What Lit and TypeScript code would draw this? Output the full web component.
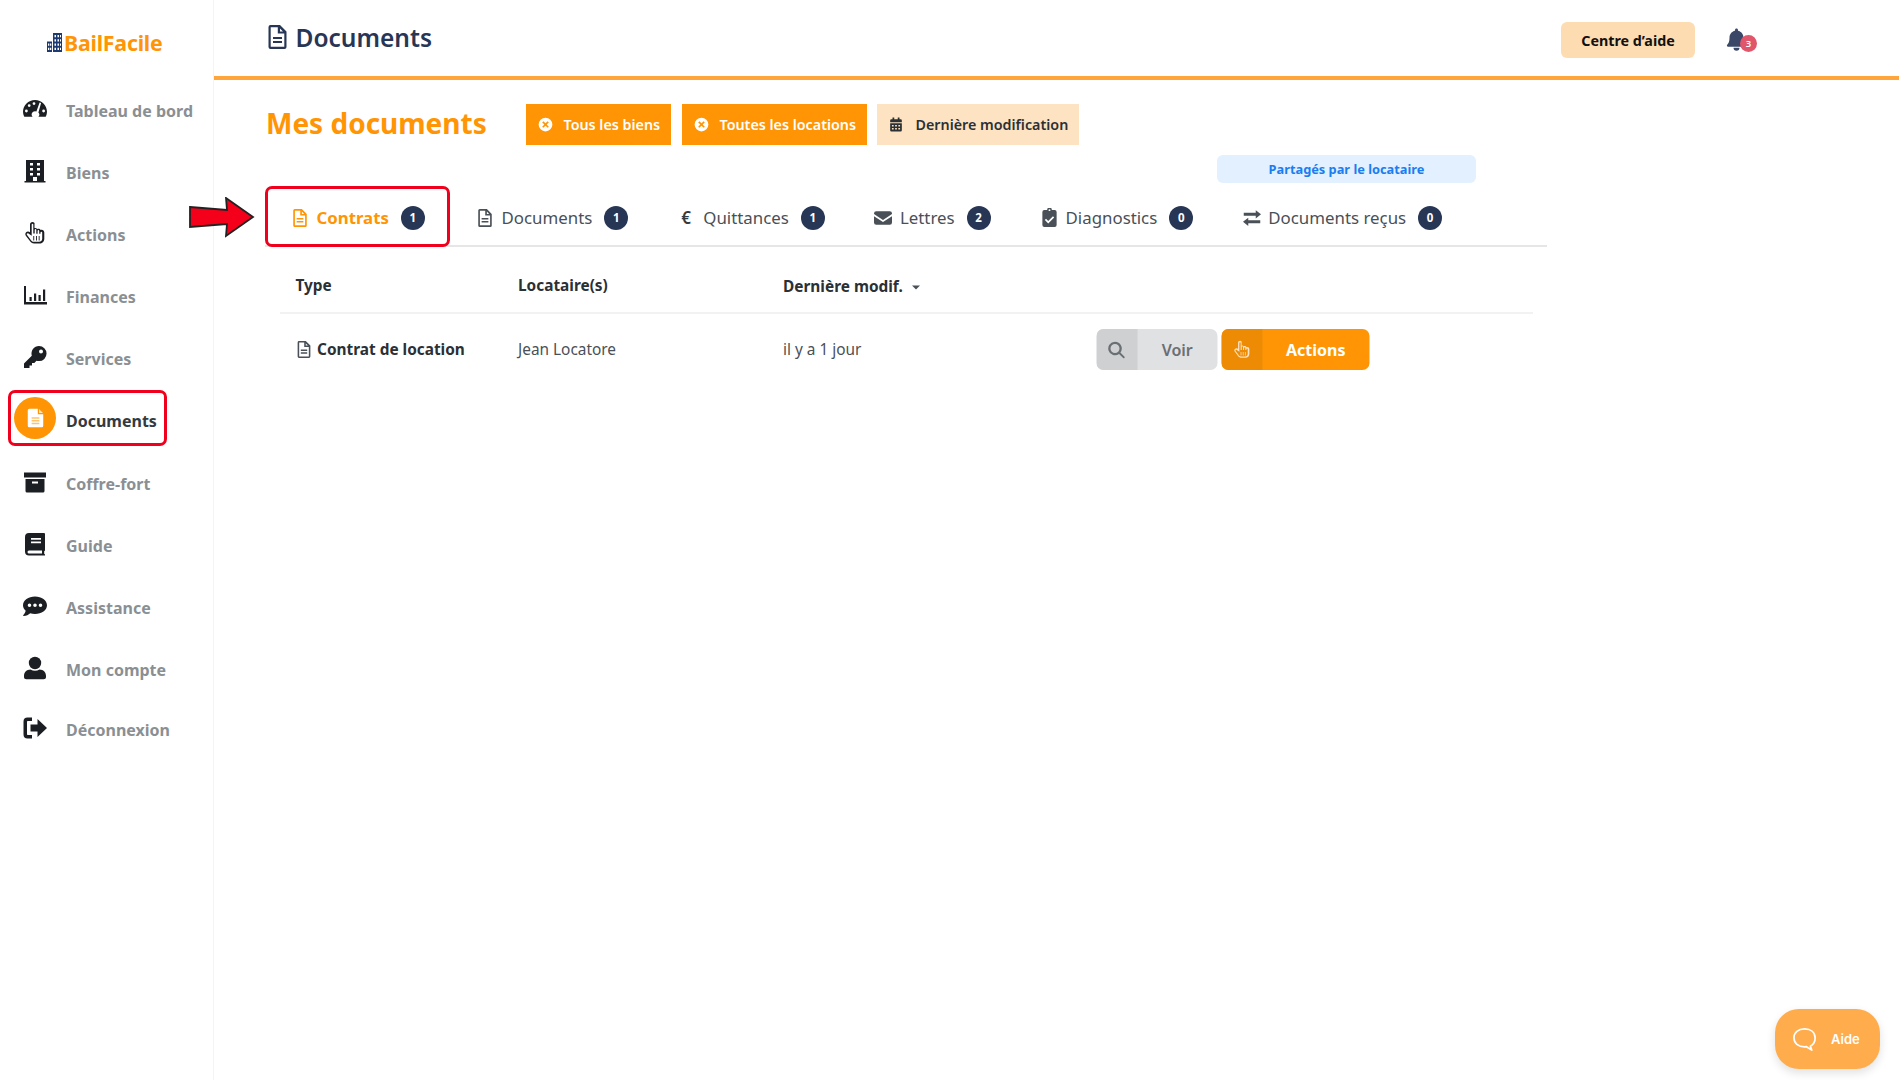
import { LitElement, html, css, svg } from "lit";
import { customElement } from "lit/decorators.js";

const ico = (vb: string, body: unknown, cls = "") =>
  html`<svg class=${cls} viewBox=${vb} fill="currentColor" aria-hidden="true">${body}</svg>`;

const I: Record<string, unknown> = {
  gauge: svg`<path fill-rule="evenodd" d="M12 3C5.400 3 0 8.300 0 14.800c0 1.600.4 3 1 4.400.2.4.6.6 1 .6h20c.4 0 .8-.2 1-.6.6-1.400 1-2.800 1-4.400C24 8.300 18.600 3 12 3zM11 5.200a1.400 1.400 0 1 1 0 2.800 1.400 1.400 0 0 1 0-2.800zM6.200 7.200a1.400 1.400 0 1 1 0 2.800 1.400 1.400 0 0 1 0-2.800zM3.400 12.600a1.400 1.400 0 1 1 0 2.800 1.400 1.400 0 0 1 0-2.800zM20.600 12.600a1.400 1.400 0 1 1 0 2.800 1.400 1.400 0 0 1 0-2.800zM16.600 5.500l1.500.5-2.700 9.400c.6.600 1 1.300 1 2.100 0 .9-.4 1.700-1 2.300H9.600c-.6-.6-1-1.400-1-2.300 0-1.900 1.500-3.200 3.500-3.200l1.300.1z"/>`,
  building: svg`<path fill-rule="evenodd" d="M3 1h18v21h1.500v1.500h-21V22H3zM7 4v2.500h3V4zm7 0v2.500h3V4zM7 9v2.500h3V9zm7 0v2.500h3V9zM7 14v2.500h3V14zm7 0v2.500h3V14zm-4 4v4h4v-4z"/>`,
  hand: svg`<path fill-rule="evenodd" d="M9.500 1C8 1 7 2.100 7 3.500v7.700c-.6-.5-1.300-.8-2-.8-1.500 0-2.700 1.300-2.700 2.700 0 .7.200 1.300.7 1.800l4.300 5.700c.9 1.200 2.300 1.900 3.800 1.900h5.400c2.700 0 4.800-2.100 4.800-4.800V11.500c0-1.500-1.200-2.700-2.600-2.700-.4 0-.7.100-1 .2-.5-.8-1.300-1.300-2.200-1.300-.5 0-.9.100-1.300.3-.5-.6-1.200-1-2-1-.3 0-.5 0-.7.100V3.500C12 2.100 11 1 9.500 1zm0 1.700c.4 0 .8.300.8.800v9h1.400V8.700c0-.5.400-.8.800-.8s.8.300.8.800v4h1.300V9.900c0-.5.400-.8.800-.8s.8.300.8.800v2.800h1.300v-1.200c0-.4.400-.8.900-.8.400 0 .8.400.8.800v6.200c0 1.700-1.400 3.100-3.100 3.100h-5.400c-1 0-1.900-.5-2.500-1.300l-4.300-5.700c-.5-.8.100-1.600.800-1.600.3 0 .5.100.7.300L8.700 14.800V3.500c0-.5.400-.8.800-.8zM11.200 15h-.9v4.500h.9zm2.700 0H13v4.500h.9zm2.700 0h-.9v4.500h.9z"/>`,
  chart: svg`<path d="M1 3h2v16h21v2.500H1zM6.500 14h2.200v4H6.500zM11 10.500h2.200v7.500H11zM15.500 12h2.200v6h-2.200zM20 6.500h2.200V18H20z"/>`,
  key: svg`<path fill-rule="evenodd" d="M16 1a7.500 7.500 0 0 0-7.200 9.700L1 18.500V23h5.500v-2.500H9V18h2.300l2.200-2.300c.8.300 1.600.4 2.500.4A7.500 7.500 0 0 0 16 1zm2 3.500a2 2 0 1 1 0 4 2 2 0 0 1 0-4z"/>`,
  archive: svg`<path d="M1 2.500h22v5H1zM2.500 9h19v12a1.500 1.500 0 0 1-1.500 1.500H4A1.500 1.500 0 0 1 2.500 21zm6.500 2.500v2h6v-2z" fill-rule="evenodd"/>`,
  book: svg`<path fill-rule="evenodd" d="M6 1h15a1 1 0 0 1 1 1v16.500l-.8.700v2.600l.8.700V23.500H6a4 4 0 0 1-4-4V5a4 4 0 0 1 4-4zm2 5v1.700h10V6zm0 3.500v1.700h10V9.500zM6 18.500a1.500 1.500 0 0 0 0 3h13v-3z"/>`,
  comment: svg`<path fill-rule="evenodd" d="M12 2.500c6.600 0 12 3.900 12 8.800s-5.400 8.800-12 8.800c-1.700 0-3.400-.3-4.800-.8C5.500 20.700 3.400 22 .6 22c-.5 0-.7-.5-.4-.8 1-1.100 2.100-2.700 2.500-4.400C1 15.300 0 13.400 0 11.300 0 6.400 5.400 2.500 12 2.500zM6.500 9.500a1.800 1.800 0 1 0 0 3.600 1.800 1.800 0 0 0 0-3.600zm5.500 0a1.800 1.800 0 1 0 0 3.600 1.800 1.800 0 0 0 0-3.600zm5.500 0a1.800 1.800 0 1 0 0 3.600 1.800 1.800 0 0 0 0-3.600z"/>`,
  user: svg`<circle cx="12" cy="7" r="6.200"/><path d="M7.500 13.500c1.300.8 2.900 1.200 4.500 1.200s3.200-.4 4.500-1.200c3.800 0 6.500 2.800 6.500 6.300v1.200c0 1.300-1 2.300-2.300 2.300H3.300C2 23.300 1 22.300 1 21v-1.200c0-3.500 2.700-6.300 6.500-6.300z"/>`,
  logout: svg`<path d="M9 5H5C4.400 5 4 5.400 4 6v12c0 .6.400 1 1 1h4v3.500H4.500A4 4 0 0 1 .5 18.500v-13a4 4 0 0 1 4-4H9z"/><path d="M14.500 3 24 12l-9.500 9v-5.500H7.500v-7h7z"/>`,
  fileo: svg`<path fill-rule="evenodd" d="M5 0h9.500L21 6.500V22a2 2 0 0 1-2 2H5a2 2 0 0 1-2-2V2a2 2 0 0 1 2-2zm.2 2.200V21.800h13.600V8.500h-6.500V2.200zm9.300 1.200V6.500h3zM7.500 12h9v2h-9zm0 4h9v2h-9z"/>`,
  xc: svg`<path fill-rule="evenodd" d="M12 1a11 11 0 1 1 0 22 11 11 0 0 1 0-22zM8.600 6.700 6.700 8.600 10.100 12l-3.400 3.400 1.900 1.900 3.400-3.400 3.400 3.400 1.900-1.900-3.400-3.400 3.400-3.400-1.900-1.900L12 10.100z"/>`,
  cal: svg`<path fill-rule="evenodd" d="M6 0h3v3h6V0h3v3h2a2 2 0 0 1 2 2v3H2V5a2 2 0 0 1 2-2h2zM2 10h20v12a2 2 0 0 1-2 2H4a2 2 0 0 1-2-2zm3 3v2.500h3V13zm5.500 0v2.500h3V13zm5.500 0v2.500h3V13zM5 18v2.500h3V18zm5.500 0v2.500h3V18zm5.500 0v2.500h3V18z"/>`,
  mail: svg`<path d="M3 3h18a3 3 0 0 1 3 3v.8L12 14.500 0 6.800V6a3 3 0 0 1 3-3zM0 9.500l12 7.700 12-7.700V18a3 3 0 0 1-3 3H3a3 3 0 0 1-3-3z"/>`,
  clip: svg`<path fill-rule="evenodd" d="M9 2.500a3 3 0 0 1 6 0h3.500A2.500 2.500 0 0 1 21 5v16.500a2.500 2.500 0 0 1-2.500 2.500h-13A2.500 2.500 0 0 1 3 21.500V5a2.500 2.500 0 0 1 2.500-2.500zM12 1.500a1.200 1.200 0 1 0 0 2.400 1.200 1.200 0 0 0 0-2.400zM16.400 10.500l-6 6-2.800-2.800-1.500 1.500 4.300 4.400 7.500-7.600z"/>`,
  swap: svg`<path d="M17 1.500 24 7l-7 5.500V9H1V5h16zM7 11.500V15h16v4H7v3.500L0 17z"/>`,
  search: svg`<path fill-rule="evenodd" d="M10 1a9 9 0 0 1 7.200 14.400l5.500 5.500a1.300 1.300 0 0 1-1.800 1.800l-5.500-5.500A9 9 0 1 1 10 1zm0 3a6 6 0 1 0 0 12 6 6 0 0 0 0-12z"/>`,
  bell: svg`<path d="M12 0c1 0 1.700.7 1.700 1.700v.9C17.500 3.400 20 6.700 20 10.500c0 4.500 1 6.300 2.600 8 .4.400.5 1 .3 1.400-.2.600-.7.900-1.300.9H2.400c-.6 0-1.100-.3-1.300-.9-.2-.5-.1-1 .3-1.400 1.600-1.700 2.600-3.500 2.600-8 0-3.800 2.500-7.100 6.300-7.900v-.9C10.300.7 11 0 12 0zM8.600 22h6.800a3.400 3.400 0 0 1-6.800 0z"/>`,
};

const NAV: [string, string][] = [
  ["gauge", "Tableau de bord"], ["building", "Biens"], ["hand", "Actions"], ["chart", "Finances"],
  ["key", "Services"], ["file", "Documents"], ["archive", "Coffre-fort"], ["book", "Guide"],
  ["comment", "Assistance"], ["user", "Mon compte"], ["logout", "Déconnexion"],
];

const TABS: [string, string, number][] = [
  ["fileo", "Contrats", 1], ["fileo", "Documents", 1], ["euro", "Quittances", 1],
  ["mail", "Lettres", 2], ["clip", "Diagnostics", 0], ["swap", "Documents reçus", 0],
];

const FILE_VB = "3 0 18 24";

@customElement("app-root")
export class AppRoot extends LitElement {
  static styles = css`
    :host { display: block; width: 1899px; height: 1080px; overflow: hidden; background: #fff; color: #212529;
      font-family: "Noto Sans", "Open Sans", sans-serif; position: relative; }
    * { box-sizing: border-box; }
    svg { display: block; flex: none; }
    .app { display: flex; height: 1080px; }
    .side { width: 214px; flex: none; border-right: 1px solid #f4f4f5; padding-top: 28px; display: flex; flex-direction: column; }
    .logo { display: flex; align-items: center; gap: 2px; height: 28px; margin: 0 0 24px 47px; color: #ff9505; font-weight: 700; font-size: 21.300px; letter-spacing: -.2px; }
    .logo svg { width: 15px; height: 19px; }
    .nav { display: flex; flex-direction: column; padding-left: 8px; }
    .item { height: 62.100px; display: flex; align-items: center; color: #8a8f93; font-weight: 700; font-size: 16px; padding-left: 15px; white-space: nowrap; }
    .item:last-child { margin-top: -1.500px; }
    .item svg { width: 24px; height: 24px; color: #1b1e22; margin-right: 19px; transform: translateY(-2px); }
    .item.on { color: #343a40; width: 159px; height: 56px; margin: 0 0 6.100px; border: 3px solid #f0001c; border-radius: 7px; padding-left: 3px; }
    .item.on span { transform: translateY(2.500px); }
    .disc { width: 42px; height: 42px; border-radius: 50%; background: #ff9505; display: flex; align-items: center; justify-content: center; margin-right: 10px; flex: none; }
    .item .disc svg { width: 17px; height: 22px; margin: 0; color: #fff; transform: none; }
    .main { flex: 1; min-width: 0; display: flex; flex-direction: column; }
    .top { height: 80px; flex: none; border-bottom: 4px solid #ffa53c; display: flex; align-items: center; padding: 4px 142px 0 54px; }
    .ttl { display: flex; align-items: center; gap: 8.500px; font-size: 24.500px; font-weight: 600; color: #283655; flex: 1; transform: translateY(-3px); }
    .ttl svg { width: 19px; height: 24px; }
    .help { background: #fddcb2; border-radius: 6px; width: 134px; height: 36px; display: flex; align-items: center; justify-content: center; font-size: 14.300px; font-weight: 700; color: #111; margin-right: 31px; }
    .bell { position: relative; width: 31px; height: 30px; }
    .bell svg { width: 21px; height: 28px; color: #3a4766; }
    .bell b { position: absolute; left: 14px; top: 10px; width: 17px; height: 17px; border-radius: 50%; background: #e0566b; color: #fff; font-size: 9.500px; font-weight: 600; display: flex; align-items: center; justify-content: center; }
    .content { padding: 0 0 0 52px; }
    .head { display: flex; align-items: center; height: 41px; margin-top: 24px; }
    h1 { margin: 0 39.500px 0 0; color: #ff9505; font-size: 28px; font-weight: 700; line-height: 41px; width: 220px; white-space: nowrap; transform: translateY(-1px); }
    .fil { height: 41px; display: flex; align-items: center; background: #ff9505; color: #fff; font-size: 14.300px; font-weight: 600; padding: 0 11px 0 12px; margin-right: 10.500px; white-space: nowrap; }
    .fil svg { width: 15px; height: 15px; margin-right: 11px; color: #fff; }
    .fil.alt { background: #fde3c2; color: #2b3035; }
    .fil.alt svg { color: #2b3035; margin-right: 12px; width: 14px; }
    .shared { width: 259px; height: 28px; margin: 10px 0 0 951px; border-radius: 6px; background: #e2f0ff; color: #1a7df0; font-size: 12.800px; font-weight: 700; display: flex; align-items: center; justify-content: center; }
    .tabs { display: flex; align-items: flex-start; width: 1282px; height: 61px; margin: 3px 0 0 -1px; border-bottom: 2px solid #e6e6e6; }
    .tab { height: 61px; flex: none; display: flex; align-items: center; font-size: 16.850px; color: #495057; white-space: nowrap; padding: 2px 25px 0 26px; }
    .tab svg { height: 18px; width: 14px; margin-right: 9.500px; color: #495057; }
    .tab svg.fileo { margin-left: 2px; }
    .tab svg.mail { width: 18px; margin-left: -2px; margin-right: 8px; }
    .tab svg.clip { width: 15px; height: 19px; margin-right: 9px; }
    .tab svg.swap { width: 18px; height: 18px; margin-left: -1px; margin-right: 7px; }
    .tab .eu { width: 12px; margin: 0 10px 0 2px; font-size: 17px; font-weight: 600; color: #343a40; line-height: 1; }
    .tab.on { color: #ff9505; font-weight: 700; border: 3px solid #f0001c; border-radius: 7px; padding: 2px 22px 0 23px; width: 185px; font-size: 16.800px; }
    .tab.on svg { color: #ff9505; margin-left: 2px; }
    .badge { width: 24px; height: 24px; border-radius: 50%; background: #283655; color: #fff; font-size: 11.500px; font-weight: 700; margin-left: 12px; display: flex; align-items: center; justify-content: center; flex: none; }
    .tbl { width: 1253px; margin-left: 14px; }
    .tr { display: grid; grid-template-columns: 238px 265px 312.700px 1fr; align-items: center; }
    .th { height: 66.500px; border-bottom: 2px solid #f2f2f2; font-size: 15.400px; font-weight: 700; color: #2b3035; padding-top: 13px; }
    .th > div:first-child, .td > div:first-child { padding-left: 15.500px; }
    .sort { display: flex; align-items: center; gap: 9px; transform: translateY(.5px); }
    .sort i { width: 0; height: 0; border: 4px solid transparent; border-top: 4.500px solid #495057; border-bottom: 0; margin-top: 2px; }
    .td { height: 72.500px; font-size: 15.400px; color: #495057; }
    .td > div:first-child.doc { display: flex; align-items: center; gap: 6px; font-weight: 700; color: #2b3035; padding-left: 17px; }
    .doc svg { width: 14px; height: 17px; color: #495057; }
    .acts { display: flex; gap: 4px; transform: translateX(.5px); }
    .btn { height: 41px; border-radius: 7px; display: flex; overflow: hidden; font-size: 16px; font-weight: 700; align-items: center; }
    .btn span { width: 41px; height: 100%; display: flex; align-items: center; justify-content: center; flex: none; }
    .btn em { flex: 1; text-align: center; font-style: normal; }
    .voir { width: 121px; background: #e0e1e3; color: #6a6f74; font-weight: 600; }
    .voir span { background: #cfd0d2; }
    .voir svg { width: 18px; height: 18px; color: #6a6f74; }
    .act { width: 148px; background: #ff9505; color: #fff; }
    .act span { background: #ee8b05; }
    .act svg { width: 19px; height: 19px; color: #fde3c2; }
    .arrow { position: absolute; left: 189px; top: 197px; width: 67px; height: 41px; }
    .aide { position: absolute; left: 1775px; top: 1009px; width: 105px; height: 60px; border-radius: 24px; background: #ffac4d; color: #fff; box-shadow: 0 4px 10px rgba(0,0,0,.12); display: flex; align-items: center; padding-left: 17px; gap: 12px; font-family: Inter, sans-serif; font-size: 13px; font-weight: 600; }
    .aide svg { width: 27px; height: 27px; }
  `;

  render() {
    return html`<div class="app">
      <aside class="side">
        <div class="logo">
          <svg viewBox="0 0 15 18" preserveAspectRatio="none"><path fill="#1d3a73" d="M0 8h5v10H0zM6 0h9v18H6z"/><path fill="#fff" d="M7.500 2h1.500v2H7.500zm3 0H12v2h-1.500zm2.500 0h1v2h-1zM7.500 6h1.500v2H7.500zm3 0H12v2h-1.500zm2.500 0h1v2h-1zM7.500 10h1.500v2H7.500zm3 0H12v2h-1.500zm2.500 0h1v2h-1zM1 10h1.300v2H1zm2 0h1.300v2H3zM1 14h1.300v2H1zm2 0h1.300v2H3zM7.500 14h1.500v2H7.500zm3 0H12v2h-1.500zm2.500 0h1v2h-1z"/></svg>
          <span>BailFacile</span>
        </div>
        <nav class="nav">
          ${NAV.map(([i, t]) => t === "Documents"
            ? html`<div class="item on"><div class="disc">${ico("0 0 22 24", svg`<path fill="#fff" d="M3 0h11v7h7v15a2 2 0 0 1-2 2H3a2 2 0 0 1-2-2V2a2 2 0 0 1 2-2z"/><path fill="#ffe6c4" d="M15.500.4 20.600 5.500h-5.100z"/><path fill="#ffc36e" d="M6 11h10v2H6zm0 3.500h10v2H6zM6 18h10v2H6z"/>`)}</div><span>${t}</span></div>`
            : html`<div class="item">${ico("0 0 24 24", I[i])}${t}</div>`)}
        </nav>
      </aside>
      <main class="main">
        <header class="top">
          <div class="ttl">${ico(FILE_VB, I.fileo)}Documents</div>
          <div class="help">Centre d’aide</div>
          <div class="bell">${ico("0 0 24 24", I.bell)}<b>3</b></div>
        </header>
        <section class="content">
          <div class="head">
            <h1>Mes documents</h1>
            <div class="fil">${ico("0 0 24 24", I.xc)}Tous les biens</div>
            <div class="fil">${ico("0 0 24 24", I.xc)}Toutes les locations</div>
            <div class="fil alt">${ico("0 0 24 24", I.cal)}Dernière modification</div>
          </div>
          <div class="shared">Partagés par le locataire</div>
          <div class="tabs">
            ${TABS.map(([i, t, n], k) => html`<div class="tab ${k === 0 ? "on" : ""}">
              ${i === "euro" ? html`<span class="eu">€</span>` : ico(i === "fileo" || i === "clip" ? FILE_VB : "0 0 24 24", I[i], i)}${t}<span class="badge">${n}</span></div>`)}
          </div>
          <div class="tbl">
            <div class="tr th"><div>Type</div><div>Locataire(s)</div><div class="sort">Dernière modif.<i></i></div><div></div></div>
            <div class="tr td">
              <div class="doc">${ico(FILE_VB, I.fileo)}Contrat de location</div>
              <div>Jean Locatore</div>
              <div>il y a 1 jour</div>
              <div class="acts">
                <div class="btn voir"><span>${ico("0 0 24 24", I.search)}</span><em>Voir</em></div>
                <div class="btn act"><span>${ico("0 0 24 24", I.hand)}</span><em>Actions</em></div>
              </div>
            </div>
          </div>
        </section>
      </main>
    </div>
    <svg class="arrow" viewBox="0 0 67 41"><path d="M1 10 38 13 37 1 64 20 37 39 38 27 1 30z" fill="#f5001a" stroke="#222" stroke-width="1.800" stroke-linejoin="miter"/></svg>
    <div class="aide">
      <svg viewBox="0 0 28 28" fill="none" stroke="#fff" stroke-width="1.800"><path d="M13 3c6.500 0 11 3.500 11 9.500 0 4-2 7-5 8.500l1.500 4-5.500-3.500c-.7.100-1.300.100-2 .1C6.500 21.600 2 17.800 2 12.300 2 6.700 6.500 3 13 3z" stroke-linejoin="round"/></svg>
      Aide
    </div>`;
  }
}
